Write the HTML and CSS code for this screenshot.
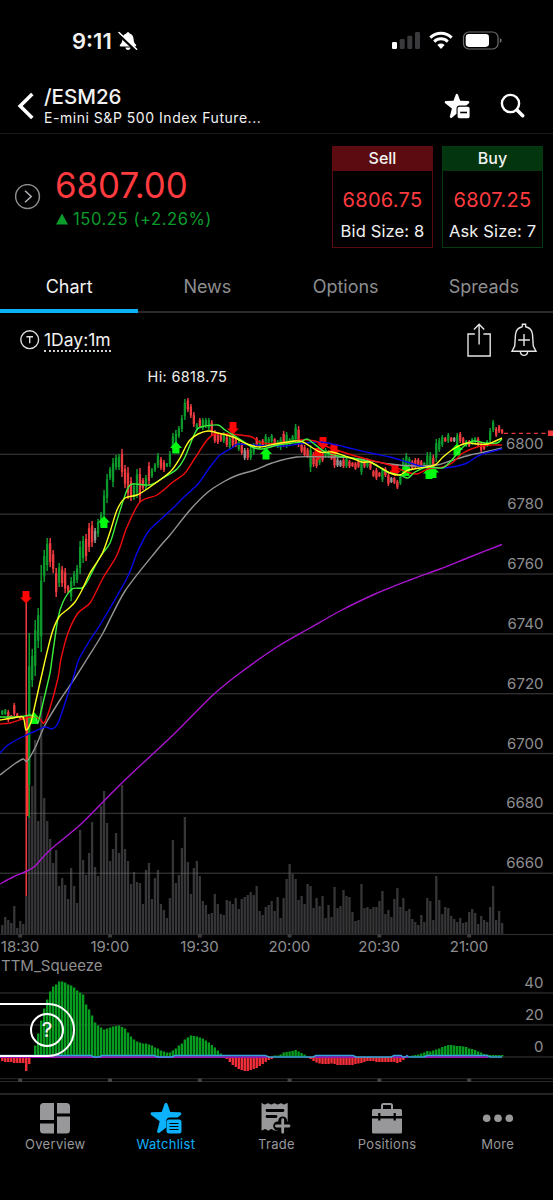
FILE: index.html
```html
<!DOCTYPE html>
<html lang="en">
<head>
    <meta charset="UTF-8">
    <meta name="viewport" content="width=device-width, initial-scale=1.0">
    <title>/ESM26</title>
    <link rel="stylesheet" href="styles.css">
</head>
<body>
    <div class="status-bar">
        <div class="status-left">
            <span class="clock">9:11</span>
            <svg class="silent-icon" width="20" height="20" viewBox="0 0 20 20">
                <path d="M10 1.2c1 0 1.500.6 1.600 1.400 2.600.8 3.900 3 4 5.400.1 3 .9 4.300 2.200 5.600.8.8.5 1.800-.6 1.800H2.800c-1.100 0-1.400-1-.6-1.800C3.500 12.300 4.300 11 4.400 8c.1-2.400 1.400-4.600 4-5.400.1-.8.6-1.400 1.600-1.400zM7.400 16.500h5.200c-.3 1.500-1.200 2.400-2.600 2.400s-2.300-.9-2.600-2.400z" fill="#fff"/>
                <path d="M0 2.600 17.500 19" stroke="#000" stroke-width="3"/>
                <path d="M1 1.500 18.600 18.200" stroke="#fff" stroke-width="1.500" stroke-linecap="round"/>
            </svg>
        </div>
        <svg width="112" height="20" viewBox="0 0 112 20">
            <g fill="#3a3a3c">
                <rect x="1" y="11" width="5" height="7" rx="1.3" fill="#fff"/>
                <rect x="8.7" y="8" width="5" height="10" rx="1.3"/>
                <rect x="16.3" y="4.7" width="5" height="13.3" rx="1.3"/>
                <rect x="24" y="1" width="5" height="17" rx="1.3"/>
            </g>
            <g fill="none" stroke="#fff" stroke-width="2.9">
                <path d="M39.3 6.600a15.300 15.300 0 0 1 21.400 0"/>
                <path d="M43.2 10.600a9.700 9.700 0 0 1 13.600 0"/>
            </g>
            <path d="M46.400 13.900a5.200 5.200 0 0 1 7.200 0L50 17.900z" fill="#fff"/>
            <rect x="72.500" y="1" width="34.500" height="17" rx="5.3" fill="none" stroke="#6e6e70" stroke-width="1.2"/>
            <rect x="74.700" y="3.1" width="23.3" height="12.8" rx="3.3" fill="#fff"/>
            <path d="M108.800 7c1.300.6 1.800 1.400 1.800 2.500s-.5 1.900-1.800 2.500z" fill="#6e6e70"/>
        </svg>
    </div>

    <header class="header">
        <svg class="back" width="18" height="28" viewBox="0 0 18 28">
            <path d="M15.3 2 3.2 14l12.100 12" fill="none" stroke="#fff" stroke-width="3.6"/>
        </svg>
        <div class="symbol">
            <h1>/ESM26</h1>
            <p>E-mini S&amp;P 500 Index Future...</p>
        </div>
        <div class="header-actions">
            <svg width="26" height="26" viewBox="0 0 26 26">
                <path d="M12.800.8c.6 0 1 .4 1.200.9l2.200 6.100 7.800.2c1.300.1 1.800 1.400.9 2.200L22.300 12.500h-6.800c-1.700 0-3 1.300-3 3v5.300l-4.600 3.900c-1.100.7-2.300 0-2-1.400l2-7.700L1.200 10.200C.2 9.400.7 8.100 2 8l7.500-.2 2.200-6.100c.2-.5.600-.9 1.100-.9z" fill="#fff"/>
                <rect x="13.6" y="13.7" width="12" height="11.6" rx="1.8" fill="#fff"/>
                <path d="M16.200 19.500h6.800" stroke="#000" stroke-width="1.6"/>
            </svg>
            <svg width="25" height="25" viewBox="0 0 25 25">
                <circle cx="10.500" cy="10.500" r="8.6" fill="none" stroke="#fff" stroke-width="2.4"/>
                <path d="m17 17 5.700 5.700" stroke="#fff" stroke-width="3.500" stroke-linecap="round"/>
            </svg>
        </div>
    </header>

    <section class="quote">
        <svg class="expand" width="26" height="26" viewBox="0 0 26 26" fill="none">
            <circle cx="12.500" cy="12.500" r="11.900" stroke="#8e8e93" stroke-width="1.500"/>
            <path d="m10 6.800 6.200 5.700-6.200 5.700" stroke="#b4b4b8" stroke-width="1.500"/>
        </svg>
        <div class="last">
            <div class="price">6807.00</div>
            <div class="change"><span class="up"></span>150.25 (+2.26%)</div>
        </div>
        <div class="ticket sell">
            <div class="ticket-head">Sell</div>
            <div class="ticket-price">6806.75</div>
            <div class="ticket-size">Bid Size: 8</div>
        </div>
        <div class="ticket buy">
            <div class="ticket-head">Buy</div>
            <div class="ticket-price">6807.25</div>
            <div class="ticket-size">Ask Size: 7</div>
        </div>
    </section>

    <nav class="tabs">
        <a class="tab active">Chart</a>
        <a class="tab">News</a>
        <a class="tab">Options</a>
        <a class="tab">Spreads</a>
    </nav>

    <div class="toolbar">
        <svg width="20" height="20" viewBox="0 0 20 20" fill="none" stroke="#ddd">
            <circle cx="9.700" cy="9.700" r="8.900" stroke-width="1.4"/>
            <path d="M6.400 6.700h6.600M9.700 6.700v6.600" stroke-width="1.4"/>
        </svg>
        <span class="interval">1Day:1m</span>
        <div class="toolbar-actions">
            <svg width="24" height="34" viewBox="0 0 24 34" fill="none" stroke="#e6e6e6" stroke-width="1.4">
                <path d="M7.800 11H1v22h22.200V11h-6.800M12.100 21.500V1.300M7 6.500l5.100-5.300 5.100 5.300"/>
            </svg>
            <svg width="26" height="34" viewBox="0 0 26 34" fill="none" stroke="#e6e6e6" stroke-width="1.4">
                <path d="M11.400 3.700V1.200h3.200v2.500c4 .8 6.500 3.600 6.900 7.800l.8 11.500 2.700 5.300H1L3.700 23l.8-11.500c.4-4.200 2.900-7 6.900-7.800M9.300 28.600c.4 2.700 1.700 3.800 3.700 3.800s3.300-1.100 3.700-3.800M13 11v12M7.200 17h11.700"/>
            </svg>
        </div>
    </div>

    <div class="chart-wrap">
        <svg id="chart" width="553" height="733" viewBox="0 360 553 733"></svg>
        <div class="help"><span>?</span></div>
    </div>

    <nav class="bottom-nav">
        <a class="nav-item">
            <svg width="32" height="32" viewBox="0 0 32 32" fill="currentColor">
                <path d="M4.500 0H15v17H1V3.500A3.500 3.500 0 0 1 4.500 0zM18 0h9.500A3.500 3.500 0 0 1 31 3.500V10.500H18zM18 13.500h13v13.500a3.500 3.500 0 0 1-3.500 3.500H18zM1 20.500h14v10H4.500A3.500 3.500 0 0 1 1 27z"/>
            </svg>
            Overview
        </a>
        <a class="nav-item current">
            <svg width="32" height="32" viewBox="0 0 32 32" fill="currentColor">
                <path d="M16 0c.8 0 1.300.5 1.500 1.100L20.300 9l9.500.3c1.600.1 2.100 1.700 1 2.600l-3.200 2.600h-7.800c-2.100 0-3.600 1.500-3.600 3.600v6.300l-6.600 5.300c-1.300.9-2.800 0-2.400-1.600l2.500-9.800-8.500-6.400c-1.200-1-.6-2.500.9-2.600l9.600-.3 2.800-7.900c.2-.6.700-1.100 1.500-1.100z"/>
                <rect x="16.500" y="16.500" width="15" height="14" rx="2.500"/>
                <path d="M19.500 20.500h9M19.500 23.500h9M19.500 26.500h9" stroke="#000" stroke-width="1.2"/>
            </svg>
            Watchlist
        </a>
        <a class="nav-item">
            <svg width="32" height="32" viewBox="0 0 32 32" fill="currentColor">
                <path d="M1.500 0c1.300.3 1.700 1.500 3.200 1.500S6.900.3 8 .3s1.700 1.200 3.200 1.200S13.400.3 14.500.3s1.700 1.200 3.200 1.200S19.900.3 21 .3s1.700 1.200 3 1.200S26.200.3 27.700 0v27.500h-13c-1.700 0-2-1.500-3.300-1.500s-1.700 1.500-3.200 1.500S6.500 26 5.200 26s-2 1.300-3.700 1.500z"/>
                <path d="M7 7.500h16M7 13.500h9" stroke="#000" stroke-width="2.8" stroke-linecap="round"/>
                <path d="M6 19.500h7" stroke="#000" stroke-width="0"/>
                <path d="M22.700 18v10M17.700 23h10" stroke="#000" stroke-width="9" stroke-linecap="round"/>
                <path d="M22.700 16.700v12.600M16.400 23H29" stroke="currentColor" stroke-width="2.8" stroke-linecap="round"/>
            </svg>
            Trade
        </a>
        <a class="nav-item">
            <svg width="32" height="32" viewBox="0 0 32 32" fill="currentColor">
                <path d="M11 7V2.500A1.500 1.500 0 0 1 12.500 1h7A1.500 1.500 0 0 1 21 2.500V7" fill="none" stroke="currentColor" stroke-width="2"/>
                <path d="M2.500 6h27A1.500 1.500 0 0 1 31 7.500V13H1V7.500A1.500 1.500 0 0 1 2.500 6zM1 15.500h30V29a1.500 1.500 0 0 1-1.500 1.500h-27A1.500 1.500 0 0 1 1 29z"/>
                <path d="M8.300 10v7.500M23.700 10v7.500" stroke="#000" stroke-width="2.200"/>
            </svg>
            Positions
        </a>
        <a class="nav-item">
            <svg width="32" height="32" viewBox="0 0 32 32" fill="currentColor">
                <circle cx="4.700" cy="15.300" r="3.800"/>
                <circle cx="16" cy="15.300" r="3.800"/>
                <circle cx="27.300" cy="15.300" r="3.800"/>
            </svg>
            More
        </a>
    </nav>
    <script src="chart.js"></script>
</body>
</html>
```

FILE: styles.css
```css
:root {
    --bg: #000;
    --text: #f2f2f2;
    --muted: #8e8e90;
    --line: #2a2a2c;
    --accent: #0cb2fc;
    --red: #ff3b3f;
    --green: #0c9c2c;
}

* {
    box-sizing: border-box;
}

body {
    margin: 0;
    width: 553px;
    height: 1200px;
    overflow: hidden;
    background-color: var(--bg);
    color: var(--text);
    font-family: Inter, "Liberation Sans", sans-serif;
}

svg {
    display: block;
    flex: none;
}

/* Status bar */
.status-bar {
    height: 72px;
    padding: 31px 50px 0 72px;
    display: flex;
    justify-content: space-between;
    align-items: flex-start;
}

.status-left {
    display: flex;
    align-items: flex-start;
    gap: 6px;
}

.clock {
    font-size: 22px;
    line-height: 20px;
    font-weight: 600;
}

/* Header */
.header {
    height: 62px;
    padding: 14px 28px 0 17px;
    display: flex;
    align-items: flex-start;
    border-bottom: 1px solid #1b1b1d;
}

.back {
    margin-top: 6px;
}

.symbol {
    margin-left: 9px;
    flex: 1;
}

.symbol h1 {
    margin: 0;
    font-size: 20.5px;
    line-height: 22px;
    font-weight: 500;
}

.symbol p {
    margin: 0;
    font-size: 14px;
    line-height: 20px;
    letter-spacing: 0.53px;
}

.header-actions {
    display: flex;
    gap: 30px;
    margin-top: 7px;
}

/* Quote */
.quote {
    height: 126px;
    padding: 12px 10px 0 15px;
    display: flex;
    align-items: flex-start;
}

.expand {
    margin-top: 38px;
}

.last {
    margin: 18px 0 0 14px;
    flex: 1;
}

.price {
    color: var(--red);
    font-size: 34.8px;
    line-height: 42px;
}

.change {
    display: flex;
    align-items: center;
    color: var(--green);
    font-size: 16.6px;
    line-height: 26px;
    letter-spacing: 0.55px;
}

.up {
    width: 12px;
    height: 11px;
    margin: 0 5px 0 1px;
    background-color: var(--green);
    clip-path: polygon(50% 0, 100% 100%, 0 100%);
}

.ticket {
    width: 101px;
    height: 102px;
    margin-left: 9px;
    border: 1px solid #5c0c10;
    text-align: center;
    white-space: nowrap;
}

.ticket-head {
    height: 24px;
    font-size: 16px;
    line-height: 23px;
    font-weight: 500;
    background-color: #5c0c10;
}

.buy {
    border-color: #033a10;
}

.buy .ticket-head {
    background-color: #03350f;
}

.ticket-price {
    margin-top: 16px;
    color: var(--red);
    font-size: 20px;
    line-height: 27px;
    letter-spacing: 0.3px;
}

.ticket-size {
    margin-top: 4px;
    font-size: 16.5px;
    line-height: 26px;
    letter-spacing: 0.15px;
}

/* Tabs */
.tabs {
    display: flex;
    height: 53px;
    box-shadow: inset 0 -2px var(--line);
}

.tab {
    flex: 1;
    padding-top: 14px;
    color: var(--muted);
    font-size: 18px;
    line-height: 26px;
    text-align: center;
}

.tab.active {
    color: var(--text);
    border-bottom: 4px solid var(--accent);
}

/* Chart toolbar */
.toolbar {
    height: 47px;
    padding: 10px 16px 0 20px;
    display: flex;
    align-items: flex-start;
}

.toolbar > svg {
    margin-top: 7px;
}

.interval {
    margin: 6px 0 0 4px;
    font-size: 17.5px;
    line-height: 21px;
    border-bottom: 2px dotted #cfcfcf;
}

.toolbar-actions {
    margin-left: auto;
    display: flex;
    gap: 20px;
}

/* Chart */
.chart-wrap {
    position: relative;
    height: 733px;
}

#chart text {
    font-size: 15px;
    fill: var(--muted);
}

#chart .high-label {
    font-size: 14.5px;
    letter-spacing: 0.35px;
    fill: #ececec;
}

.help {
    position: absolute;
    left: -4px;
    top: 643px;
    width: 79px;
    height: 54px;
    padding: 8px 9px;
    display: flex;
    justify-content: flex-end;
    border: 2px solid #fff;
    border-radius: 0 27px 27px 0;
}

.help span {
    width: 34px;
    height: 34px;
    border: 2px solid #fff;
    border-radius: 50%;
    font-size: 20px;
    line-height: 31px;
    font-weight: 500;
    text-align: center;
}

/* Bottom navigation */
.bottom-nav {
    height: 107px;
    padding-top: 8px;
    display: flex;
    border-top: 2px solid #242426;
}

.nav-item {
    flex: 1;
    display: flex;
    flex-direction: column;
    align-items: center;
    color: #98989a;
    font-size: 13px;
    line-height: 18px;
    letter-spacing: 0.3px;
}

.nav-item.current {
    color: var(--accent);
}
```

FILE: chart.js
```js
const svg = document.getElementById('chart');
const STEP = 2.993;
const barX = i => 2.3 + i * STEP;

function add(tag, attrs, text) {
    const el = document.createElementNS('http://www.w3.org/2000/svg', tag);
    for (const key in attrs) el.setAttribute(key, attrs[key]);
    if (text) el.textContent = text;
    svg.appendChild(el);
}

// one bar per minute, 18:24 - 21:11
const volume = [
    9,17,14,11,28,6,13,10, 38,118,148,194,113,238,136,113, 95,71,84,48,56,49,35,66,
    48,31,104,74,59,81,112,67, 58,128,143,111,73,85,101,81, 149,85,73,50,62,52,51,30,
    64,71,35,56,64,30,24,16, 36,94,51,59,86,117,72,40, 66,73,58,33,29,20,21,40,
    30,20,19,34,33,30,36,25, 35,37,39,42,39,48,23,19, 27,29,33,23,
    37,16,36,55,70,60,55,34, 38,30,50,48,26,36,28,38, 16,29,17,47,26,28,44,38,
    37,22,13,14,50,26,27,25, 27,27,33,43,20,24,17,35, 46,27,36,23,25,15,12,9,
    19,12,36,33,14,58,34,20, 27,26,18,15,12,16,11,12, 22,25,21,10,18,14,12,27,
    48,14,23,11
];

// direction, high, low
const candles = `g710-715 g709-715 r710-722 r715-719 r703-716 r713-717 r716-719 r717-720
r603-896 g633-818 g649-687 g620-676 g608-648 g565-652 g550-582 g538-571
r538-567 r550-573 r568-597 g563-587 r566-587 r568-593 r585-593 g577-601
g571-586 g565-583 g541-574 g536-563 r534-561 r523-552 r521-547 n528-543
g519-537 g512-527 g490-520 g474-503 g467-480 g458-487 g455-470 g454-470
r449-477 r465-488 r467-499 r477-501 g483-500 g469-498 r468-502 r478-490
g475-490 r462-485 g468-478 g463-472 g453-468 r457-470 r460-472 g463-467
g451-467 g433-453 g430-450 g426-438 g415-432 g399-420 r398-412 r404-418
r412-427 g423-430 r418-428 g418-430 g418-428 g418-430 r420-435 r430-443
r433-444 r433-442 g432-443 r435-447 g436-449 r430-448 r438-447 g440-451
r443-455 n448-460 r448-460 g447-460 g443-455 r437-447 g440-448 r439-447
g434-447 g437-447 g434-443 r438-445 g440-448 g437-450 r431-447 g432-448
g438-445 g435-443 g424-443 r426-447 r443-453 r445-457 r448-458 g445-472
r452-467 r457-468 g453-465 r452-462 g448-458 g450-458 r452-460 r453-468
n458-467 n460-467 r458-468 g457-468 r460-468 r462-467 r462-470 r460-468
g457-475 r460-468 g458-468 r462-470 r470-477 r468-480 r472-477 g468-482
r467-477 r473-486 n477-483 r477-484 r480-489 g475-485 g458-473 g453-470
g457-468 r460-470 r458-468 r458-467 r460-468 g462-468 g452-472 g452-472
r455-472 g439-462 g438-452 g435-447 r437-442 g433-443 r437-442 n437-442
g433-447 r432-443 r437-445 g440-447 r440-447 g438-445 g437-443 r437-447
r442-452 r443-450 g440-447 g428-443 g420-432 r427-437 r425-433 r429-434`.split(/\s+/);

const squeeze = [
    -4,-5,-5,-5,-6,-6,-6,-6,-14,-7, 1,11,23,36,48,57,65,70,72,75,
    75,74,72,71,69,66,64,62,52,47, 41,34,31,29,27,28,29,30,30.5,31,
    29.5,28,24,20,17,15,14,13,13,12, 11,9,8,6,5,4,4,6,8,11,
    13,17,19,21,20.5,20,19,18,16,14, 11.5,9,6,3,1,-2,-5,-8,-10,-12,
    -13,-14,-14,-13,-12,-11,-9,-7,-5,-3, -2,1,1,2,4,4.5,5,5.5,6.5,5,
    3.5,2,-1,-2,-4,-5.5,-6.5,-7,-7,-7, -6.5,-7,-8,-8,-8,-8,-8,-8,-7,-6.5,
    -6,-5,-4,-4,-4,-5,-5,-5,-5,-5, -5,-5,-6,-5,-3,-1,0,1,1.5,2,
    3,4,5.5,5,6,7,8,9.5,10.5,11.5, 11.5,11,10.5,10.5,10,9.5,8,7.5,6.5,5,
    4,2.5,2,1.5,1.5,1.5,1.5,1.5
];

const averages = [
    ['#a914cf', '0,884 13,877 27,871 35,866 50,850 80,825 103,802 127,778 173,735 213,695 240,673 277,647 310,628 340,611 375,594 410,580 440,569 470,557 502,544.5'],
    ['#949494', '0,775 13,765 23,759 27,761 35,748 45,725 60,700 75,678 87,659 103,633 125,591 157,550 170,535 190,510 208,492 225,481 238,475 255,470 272,463 297,457 332,457 352,458 390,464 413,466 437,465 450,461 470,455 485,452 502,448'],
    ['#0808e8', '0,753 8,745 22,737 33,732 45,727 52,729 58,723 65,703 75,672 79,659 90,640 100,625 127,578 137,553 148,532 160,520 173,508 185,496 198,484 210,467 220,455 232,448 238,444 252,445 285,446 298,444 318,442 328,443 345,447 370,453 390,457 407,462 420,466 437,468 452,467 467,463 480,455 502,449'],
    ['#f00c0c', '0,724 10,723 25,718 33,717 40,719 44,723 50,708 58,678 61,659 68,633 78,613 90,603 103,578 117,555 127,527 140,502 157,495 173,482 185,473 195,458 207,440 215,434 228,434 240,435 252,437 262,443 285,443 300,440 315,441 328,447 352,455 370,460 390,465 407,472 417,474 428,469 443,467 452,463 463,453 477,447 490,445 502,445'],
    ['#3df03d', '0,717 15,717 25,716 30,715 36,718 38,723 43,703 50,673 52,659 58,618 63,602 72,589 82,588 87,582 100,557 110,543 118,517 127,490 133,484 150,485 163,478 177,469 185,457 195,433 201,427 218,425 225,430 238,438 252,447 262,449 278,445 292,443 300,442 307,439 313,443 325,452 338,456 352,458 370,462 387,472 400,475 408,478 415,472 428,467 442,468 450,462 463,447 473,441 485,443 497,443 502,439'],
    ['#ffff1e', '0,720 13,718 23,717 26,730 31,722 35,705 44,665 52,633 59,617 68,609 75,602 82,590 90,573 102,554 110,532 117,510 125,498 137,495 150,487 170,472 180,458 185,448 190,440 198,434 208,431 218,433 233,437 247,444 260,447 275,444 295,441 303,442 320,452 332,452 348,457 362,462 370,462 378,466 390,473 400,475 408,470 420,468 435,465 443,457 455,448 467,443 477,444 488,444 502,438']
];

// direction, centre x, top y
const signals = [
    ['down', 26, 591], ['up', 34, 712], ['up', 104, 516], ['up', 176, 441.5],
    ['down', 233, 422], ['up', 266, 447.5], ['down', 323, 437], ['down', 334, 444],
    ['down', 318, 448], ['down', 395, 464], ['up', 406, 464], ['up', 429, 467],
    ['up', 433, 466], ['up', 457, 443.5]
];

const colors = { g: '#0c9a2c', r: '#ee3b40', n: '#969696' };

// smooth path through the points
function curve(points) {
    const p = points.split(' ').map(s => s.split(',').map(Number));
    let d = `M${p[0]}`;
    for (let i = 0; i < p.length - 1; i++) {
        const a = p[i - 1] || p[i], b = p[i], c = p[i + 1], e = p[i + 2] || c;
        d += `C${b[0] + (c[0] - a[0]) / 7},${b[1] + (c[1] - a[1]) / 7} ${c[0] - (e[0] - b[0]) / 7},${c[1] - (e[1] - b[1]) / 7} ${c}`;
    }
    return d;
}

function hline(y, color, width) {
    add('rect', { x: 0, y: y - width / 2, width: 553, height: width, fill: color });
}

// volume
volume.forEach((h, i) => {
    add('rect', { x: barX(i) - 1.15, y: 934 - h, width: 2.3, height: h, fill: '#363638' });
});

// price grid
for (let i = 0; i < 8; i++) {
    const y = 454.3 + i * 59.85;
    hline(y, 'rgba(110, 110, 112, 0.45)', 1.3);
    add('text', { x: 543.5, y: y - 5, 'text-anchor': 'end' }, 6800 - i * 20);
}
hline(934.5, '#2a2a2c', 1.2);

// time axis
['18:30', '19:00', '19:30', '20:00', '20:30', '21:00'].forEach((label, i) => {
    const x = 20.2 + i * 89.8;
    add('rect', { x: x - 2, y: 934, width: 4, height: 3.5, fill: '#3a3a3c' });
    add('text', { x: x - 0.2, y: 952, 'text-anchor': 'middle' }, label);
});

// candles
candles.forEach((c, i) => {
    const [hi, lo] = c.slice(1).split('-').map(Number);
    const x = barX(i);
    const fill = colors[c[0]];
    const body = (lo - hi) * 0.18;
    add('rect', { x: x - 0.75, y: hi, width: 1.5, height: lo - hi, fill });
    if (i === 8) {
        add('rect', { x: x, y: 715, width: 2.6, height: 101, fill: '#ff3030' });
    } else {
        add('rect', { x: x - 1.15, y: hi + body, width: 2.3, height: lo - hi - body * 2, fill });
    }
});

signals.forEach(([dir, x, y]) => {
    const d = dir === 'up'
        ? `M${x},${y}l6,6.5h-2.5v5.5h-7v-5.5h-2.5z`
        : `M${x},${y + 12.5}l6,-6h-2.5v-6.5h-7v6.5h-2.5z`;
    add('path', { d, fill: dir === 'up' ? '#00fa10' : '#ff0505' });
});

averages.forEach(([stroke, points]) => {
    add('path', { d: curve(points), fill: 'none', stroke, 'stroke-width': 1.4 });
});

// last price
add('path', { d: 'M504 433.3H548', stroke: '#e8353a', 'stroke-width': 1.3, 'stroke-dasharray': '4 3.5' });
add('rect', { x: 548, y: 430.5, width: 5, height: 5.5, fill: '#f03a40' });
add('text', { x: 147.5, y: 382, class: 'high-label' }, 'Hi: 6818.75');

// TTM squeeze
add('text', { x: 1, y: 971 }, 'TTM_Squeeze');
[40, 20, 0].forEach((v, i) => {
    const y = 993 + i * 32;
    hline(y, '#2a2a2c', 1.4);
    add('text', { x: 543.5, y: y - 5, 'text-anchor': 'end' }, String(v));
});
squeeze.forEach((v, i) => {
    add('rect', {
        x: barX(i) - 1.2, y: v > 0 ? 1056.5 - v : 1057, width: 2.4, height: Math.abs(v),
        fill: v > 0 ? '#079c20' : '#f5303a'
    });
});
add('path', { d: 'M0 1057.2H267M315 1057.2H355M393 1057.2H408M425 1057.2H488', stroke: '#9c12b8', 'stroke-width': 1.8 });
add('path', {
    d: 'M0 1055.5H91L94 1057H99L102 1055.5H154L158 1057H172L175 1055.5H265L269 1057H313L316 1055.5H353L356 1057H391L394 1055.5H401L403 1057H405L407 1055.5L409 1057H424L427 1055.5H487L490 1057H502',
    fill: 'none', stroke: '#35a4dc', 'stroke-width': 1.4
});

hline(1078.7, '#29292b', 1);
hline(1081.5, '#29292b', 1);
for (let i = 0; i < 6; i++) {
    add('rect', { x: 18.2 + i * 89.8, y: 1078.5, width: 4, height: 3.5, fill: '#444446' });
}
```
